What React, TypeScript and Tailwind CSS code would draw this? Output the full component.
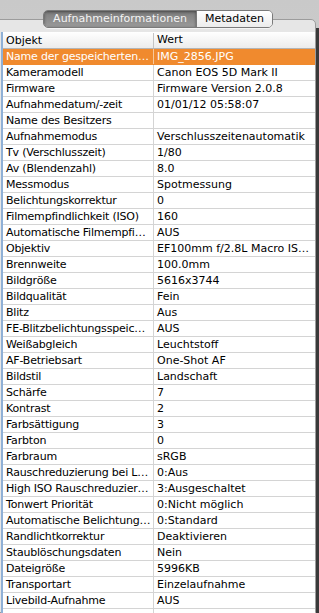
import React from 'react';

type Row = { key: string; value: string };

const rows: Row[] = [
  { key: 'Name der gespeicherten…', value: 'IMG_2856.JPG' },
  { key: 'Kameramodell', value: 'Canon EOS 5D Mark II' },
  { key: 'Firmware', value: 'Firmware Version 2.0.8' },
  { key: 'Aufnahmedatum/-zeit', value: '01/01/12 05:58:07' },
  { key: 'Name des Besitzers', value: '' },
  { key: 'Aufnahmemodus', value: 'Verschlusszeitenautomatik' },
  { key: 'Tv (Verschlusszeit)', value: '1/80' },
  { key: 'Av (Blendenzahl)', value: '8.0' },
  { key: 'Messmodus', value: 'Spotmessung' },
  { key: 'Belichtungskorrektur', value: '0' },
  { key: 'Filmempfindlichkeit (ISO)', value: '160' },
  { key: 'Automatische Filmempfi…', value: 'AUS' },
  { key: 'Objektiv', value: 'EF100mm f/2.8L Macro IS…' },
  { key: 'Brennweite', value: '100.0mm' },
  { key: 'Bildgröße', value: '5616x3744' },
  { key: 'Bildqualität', value: 'Fein' },
  { key: 'Blitz', value: 'Aus' },
  { key: 'FE-Blitzbelichtungsspeic…', value: 'AUS' },
  { key: 'Weißabgleich', value: 'Leuchtstoff' },
  { key: 'AF-Betriebsart', value: 'One-Shot AF' },
  { key: 'Bildstil', value: 'Landschaft' },
  { key: 'Schärfe', value: '7' },
  { key: 'Kontrast', value: '2' },
  { key: 'Farbsättigung', value: '3' },
  { key: 'Farbton', value: '0' },
  { key: 'Farbraum', value: 'sRGB' },
  { key: 'Rauschreduzierung bei L…', value: '0:Aus' },
  { key: 'High ISO Rauschreduzier…', value: '3:Ausgeschaltet' },
  { key: 'Tonwert Priorität', value: '0:Nicht möglich' },
  { key: 'Automatische Belichtung…', value: '0:Standard' },
  { key: 'Randlichtkorrektur', value: 'Deaktivieren' },
  { key: 'Staublöschungsdaten', value: 'Nein' },
  { key: 'Dateigröße', value: '5996KB' },
  { key: 'Transportart', value: 'Einzelaufnahme' },
  { key: 'Livebild-Aufnahme', value: 'AUS' },
  { key: '', value: '' },
];

export default function App() {
  return (
    <div
      className="relative w-[319px] h-[613px] overflow-hidden bg-gradient-to-b from-[#c9c9c9] to-[#dedede] text-[11px] text-black"
      style={{ fontFamily: '"DejaVu Sans", Verdana, sans-serif' }}
    >
      {/* panel frame behind the tabs */}
      <div className="absolute left-[-6px] right-[3px] top-[19px] bottom-0 rounded-tr-[5px] border border-[#9c9c9c] bg-[#e6e6e6]" />

      {/* dark window edge on the right */}
      <div className="absolute right-0 top-[28px] bottom-0 w-[3px] bg-[#3a3a3a]" />

      {/* segmented tabs */}
      <div className="relative flex h-[32px] items-start justify-start pl-[43px] pt-[10px]">
        <div className="flex h-[18px] overflow-hidden rounded-[5px] border border-[#7a7a7a] shadow-[0_1px_0_rgba(255,255,255,0.6)]">
          <div className="flex w-[152px] items-center justify-center bg-gradient-to-b from-[#7d7d7d] to-[#9a9a9a] text-[#f4f4f4] shadow-[inset_0_1px_3px_rgba(0,0,0,0.45)]">
            Aufnahmeinformationen
          </div>
          <div className="flex w-[76px] items-center justify-center border-l border-[#7a7a7a] bg-gradient-to-b from-white to-[#ececec] text-black">
            Metadaten
          </div>
        </div>
      </div>

      {/* table */}
      <div className="relative ml-[1px] mr-[4px] border-l-2 border-[#8fb0d6] bg-white">
        <div className="flex h-[17px] items-center border-b border-[#b4b4b4] bg-gradient-to-b from-white to-[#ececec]">
          <div className="w-[151px] border-r border-[#c4c4c4] pl-[3px] leading-[15px]">Objekt</div>
          <div className="pl-[3px]">Wert</div>
        </div>
        {rows.map((r, i) => (
          <div
            key={i}
            className={
              i === 0
                ? 'flex h-[16px] items-center border-b border-[#f08a2e] bg-[#f08a2e] text-white'
                : 'flex h-[16px] items-center border-b border-[#d4d4d4] bg-white'
            }
          >
            <div
              className={
                i === 0
                  ? 'h-full w-[151px] overflow-hidden whitespace-nowrap border-r border-[#f8c89c] pl-[3px] leading-[15px] tracking-[-0.2px]'
                  : 'h-full w-[151px] overflow-hidden whitespace-nowrap border-r border-[#d4d4d4] pl-[3px] leading-[15px] tracking-[-0.2px]'
              }
            >
              {r.key}
            </div>
            <div className="flex-1 overflow-hidden whitespace-nowrap pl-[3px] leading-[15px]">{r.value}</div>
          </div>
        ))}
      </div>
    </div>
  );
}
